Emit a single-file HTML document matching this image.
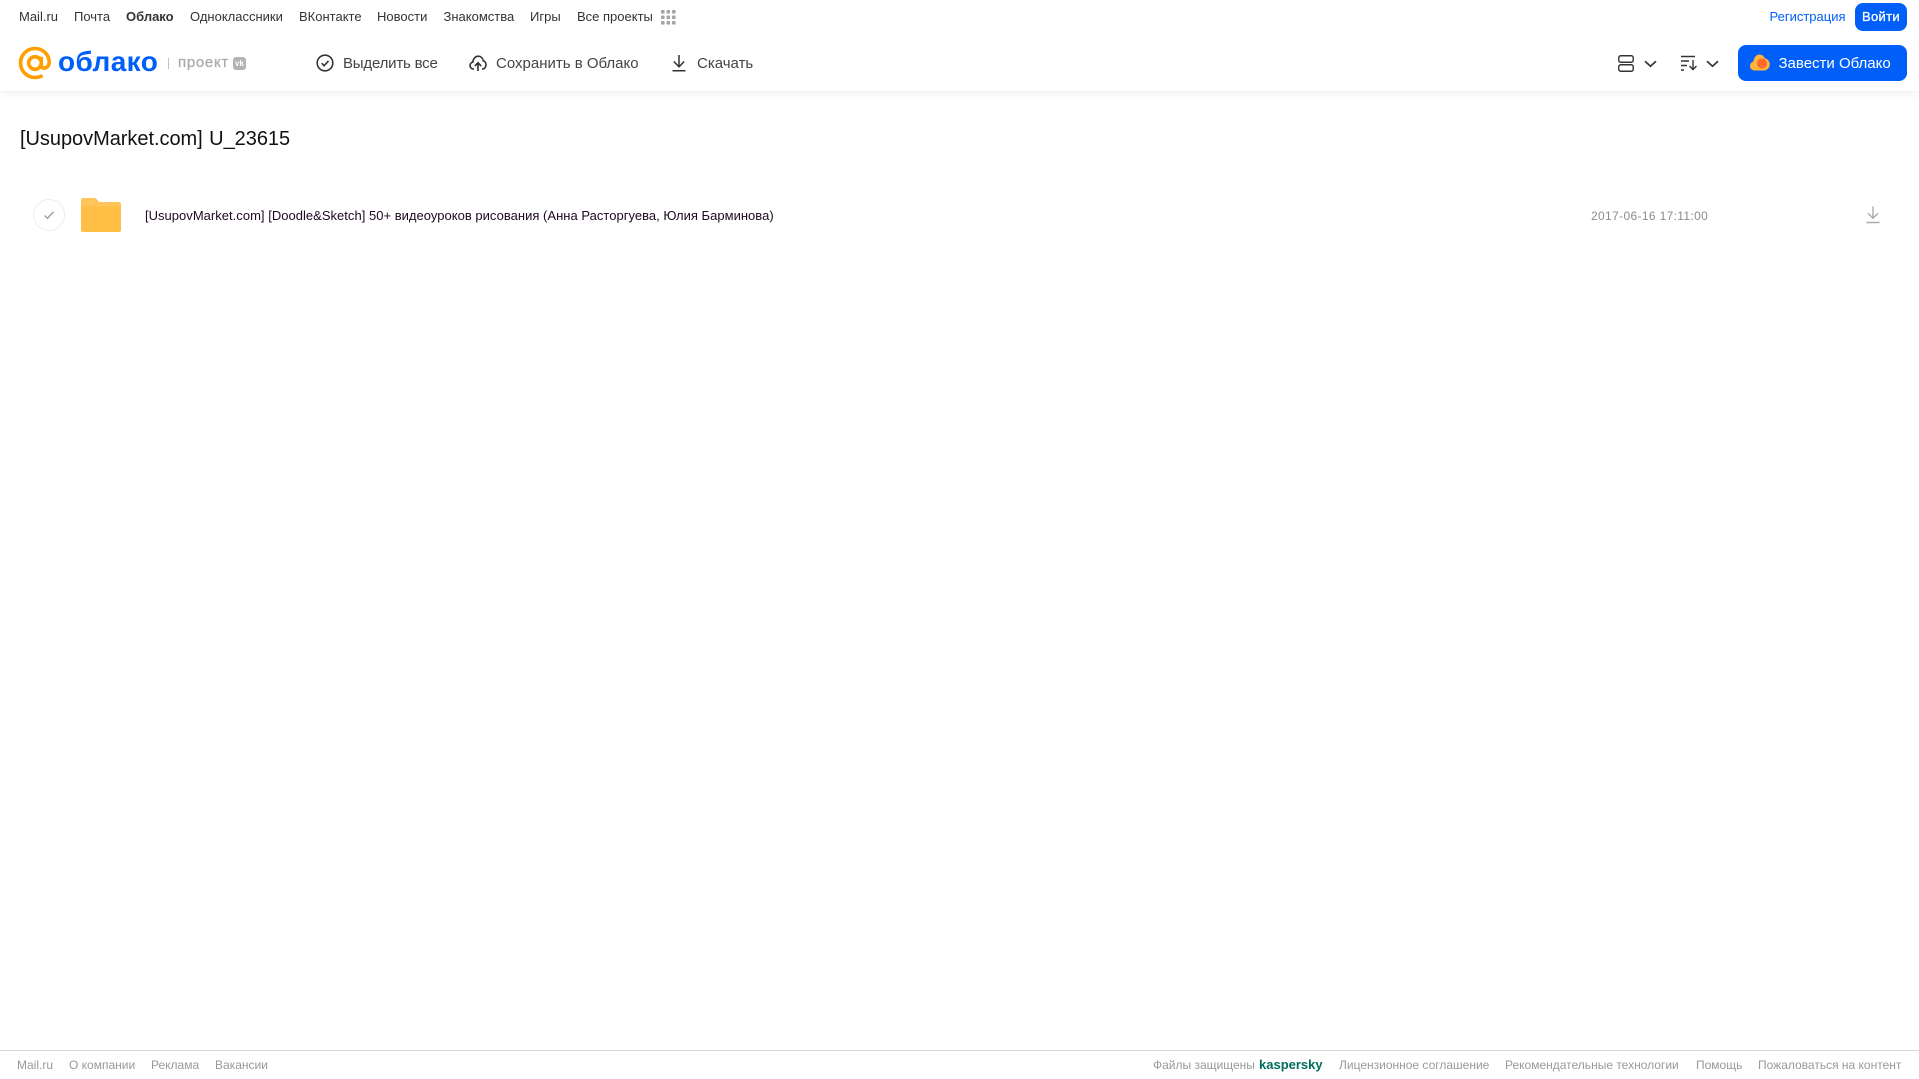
<!DOCTYPE html>
<html lang="ru"><head><meta charset="utf-8"><title>Облако</title>
<style>
html,body{margin:0;padding:0;background:#fff}
#p{position:relative;width:1919px;height:1079px;overflow:hidden;background:#fff;font-family:"Liberation Sans",Arial,sans-serif}
#p span,#p svg,#p div{position:absolute}
.t{white-space:nowrap;line-height:18px}
.n{font-size:13px;color:#333;top:8px}
.a{font-size:15px;color:#444;top:55px}
.f{font-size:12px;color:#999;top:1056px}
</style></head><body><div id="p">
<div style="left:0;top:0;width:1919px;height:91px;background:#fff;box-shadow:0 2px 8px rgba(0,0,0,.07)"></div>

<span class="t n" style="left:19px">Mail.ru</span>
<span class="t n" style="left:74px">Почта</span>
<span class="t n" style="left:126px;font-weight:bold">Облако</span>
<span class="t n" style="left:190px">Одноклассники</span>
<span class="t n" style="left:299px">ВКонтакте</span>
<span class="t n" style="left:377px">Новости</span>
<span class="t n" style="left:443.500px">Знакомства</span>
<span class="t n" style="left:530px">Игры</span>
<span class="t n" style="left:577px">Все проекты</span>
<svg style="left:661px;top:10px" width="15" height="15" fill="#a5a5a5"><rect x="0" y="0" width="3.6" height="3.6" rx="1"/><rect x="5.5" y="0" width="3.6" height="3.6" rx="1"/><rect x="11" y="0" width="3.6" height="3.6" rx="1"/><rect x="0" y="5.5" width="3.6" height="3.6" rx="1"/><rect x="5.5" y="5.5" width="3.6" height="3.6" rx="1"/><rect x="11" y="5.5" width="3.6" height="3.6" rx="1"/><rect x="0" y="11" width="3.6" height="3.6" rx="1"/><rect x="5.5" y="11" width="3.6" height="3.6" rx="1"/><rect x="11" y="11" width="3.6" height="3.6" rx="1"/></svg>

<span class="t" style="left:1769.500px;top:8px;font-size:13px;color:#005ff9">Регистрация</span>
<div style="left:1855px;top:3px;width:52px;height:28px;border-radius:8px;background:#005ff9"></div>
<span class="t" style="left:1862px;top:8px;font-size:13px;letter-spacing:.3px;-webkit-text-stroke:.3px #fff;color:#fff">Войти</span>

<svg style="left:18px;top:46px" width="34" height="34" viewBox="0 0 34 34" fill="none" stroke="#ff9e00" stroke-width="3.6"><circle cx="17" cy="17" r="6.3"/><path d="M23.3 10.7V19.500c0 3.600 5.900 3.600 7.500-1 .3-.8.4-1.600.4-2.200C31.200 8.500 24.800 2.500 17 2.500 9 2.500 2.500 9 2.500 17S9 31.500 17 31.500c3 0 5.500-.8 7.500-2"/></svg>
<span class="t" style="left:58px;top:44px;font-size:28px;line-height:36px;font-weight:bold;color:#005ff9;letter-spacing:.4px">облако</span>
<div style="left:168px;top:58px;width:1px;height:11px;background:#c0c0c0"></div>
<span class="t" style="left:178px;top:54px;font-size:15px;color:#aaa;letter-spacing:.7px;-webkit-text-stroke:.3px #aaa">проект</span>
<div style="left:233px;top:57px;width:13px;height:13px;border-radius:3px;background:#b3b3b3"></div>
<span class="t" style="left:233px;top:57px;width:13px;font-size:8px;line-height:13px;font-weight:bold;color:#fff;text-align:center">vk</span>

<svg style="left:316px;top:54px" width="18" height="18" viewBox="0 0 18 18" fill="none" stroke="#333" stroke-width="1.600"><circle cx="9" cy="9" r="7.800"/><path d="M5.600 9.200l2.500 2.500 4.400-4.800"/></svg>
<span class="t a" style="left:343px;letter-spacing:-.2px">Выделить все</span>
<svg style="left:469px;top:54px" width="18" height="18" viewBox="0 0 18 18" fill="none" stroke="#333" stroke-width="1.600"><path d="M5 15H4.500C2.500 15 1 13.400 1 11.500 1 9.800 2.200 8.400 3.800 8.100 4 5 6.300 2.200 9.300 2.200c2.600 0 4.700 2 5 4.600 1.600.4 2.700 2.100 2.700 3.900 0 2.300-1.500 4.300-3.700 4.300H13"/><path d="M9 17V9M5.800 12L9 8.800 12.200 12"/></svg>
<span class="t a" style="left:496px">Сохранить в Облако</span>
<svg style="left:671px;top:54px" width="16" height="18" viewBox="0 0 16 18" fill="none" stroke="#333" stroke-width="1.500"><path d="M8 1v11.500M2.800 7.500L8 12.800l5.200-5.300M1.500 16.800h13"/></svg>
<span class="t a" style="left:697px">Скачать</span>

<svg style="left:1618px;top:55px" width="16" height="17" viewBox="0 0 17 17" fill="none" stroke="#333" stroke-width="1.500" preserveAspectRatio="none"><rect x=".8" y=".8" width="15.400" height="6.400" rx="2"/><rect x=".8" y="9.800" width="15.400" height="6.400" rx="2"/></svg>
<svg style="left:1644px;top:60px" width="13" height="8" viewBox="0 0 13 8" fill="none" stroke="#333" stroke-width="1.700"><path d="M1 1.200l5.500 5 5.500-5"/></svg>
<svg style="left:1681px;top:55px" width="17" height="16" viewBox="0 0 17 16" fill="none" stroke="#333" stroke-width="1.400"><path d="M0 1.500h14M0 6h8M0 10.500h6M0 15h3M12 5v9.500M8.500 11l3.500 3.600 3.500-3.600"/></svg>
<svg style="left:1706px;top:60px" width="13" height="8" viewBox="0 0 13 8" fill="none" stroke="#333" stroke-width="1.700"><path d="M1 1.200l5.500 5 5.500-5"/></svg>

<div style="left:1738px;top:45px;width:169px;height:36px;border-radius:8px;background:#005ff9"></div>
<svg style="left:1750px;top:54px" width="20" height="17" viewBox="0 0 20 17"><path fill="#ffb43a" d="M5 16.500C2 16.500 0 14.400 0 12c0-2.200 1.400-3.900 3.300-4.400C3.800 3.400 6.600.5 9.500.5c2.400 0 4.400 1.600 5.200 3.700 2.900.5 5.100 3 5.100 6.100 0 3.500-2.600 6.200-6 6.200z"/><circle cx="12" cy="9.500" r="5" fill="#ff6a2b"/></svg>
<span class="t" style="left:1778.500px;top:55px;font-size:15px;color:#fff">Завести Облако</span>

<span class="t" style="left:20px;top:126px;font-size:20px;line-height:26px;color:#111;word-spacing:1px;letter-spacing:-.04px">[UsupovMarket.com] U_23615</span>

<div style="left:33px;top:199px;width:30px;height:30px;border:1px solid #ededed;border-radius:50%"></div>
<svg style="left:43px;top:210px" width="12" height="10" viewBox="0 0 12 10" fill="none" stroke="#a3a3a3" stroke-width="1.500"><path d="M1.500 5.500l3 2.800 6-6.600"/></svg>
<svg style="left:81px;top:198px" width="40" height="34" viewBox="0 0 40 34"><path fill="#ffc45a" d="M2 0h11c1.500 0 2.400.7 3.200 1.700L18 4h20c1.100 0 2 .9 2 2v6H0V2C0 .9.900 0 2 0z"/><rect y="8" width="40" height="26" rx="2" fill="#ffbe45"/></svg>
<span class="t" style="left:145px;top:207px;font-size:13px;letter-spacing:.02px;color:#1d0a20">[UsupovMarket.com] [Doodle&amp;Sketch] 50+ видеоуроков рисования (Анна Расторгуева, Юлия Барминова)</span>
<span class="t" style="left:1591px;top:207px;font-size:12px;color:#8c8c8c;letter-spacing:.35px">2017-06-16 17:11:00</span>
<svg style="left:1866px;top:206px" width="14" height="18" viewBox="0 0 14 18" fill="none" stroke="#aaa" stroke-width="1.400"><path d="M7 .5v11.500M2 7.200L7 12.200l5-5M.5 16.500h13"/></svg>

<div style="left:0;top:1050px;width:1919px;height:1px;background:#d9d9d9"></div>
<span class="t f" style="left:17px">Mail.ru</span>
<span class="t f" style="left:69px">О компании</span>
<span class="t f" style="left:151px">Реклама</span>
<span class="t f" style="left:215px">Вакансии</span>
<span class="t f" style="left:1153px">Файлы защищены</span>
<span class="t" style="left:1259px;top:1056px;font-size:13px;font-weight:bold;color:#006d5c">kaspersky</span>
<span class="t f" style="left:1339px">Лицензионное соглашение</span>
<span class="t f" style="left:1505px">Рекомендательные технологии</span>
<span class="t f" style="left:1696px">Помощь</span>
<span class="t f" style="left:1758px">Пожаловаться на контент</span>
</div></body></html>
